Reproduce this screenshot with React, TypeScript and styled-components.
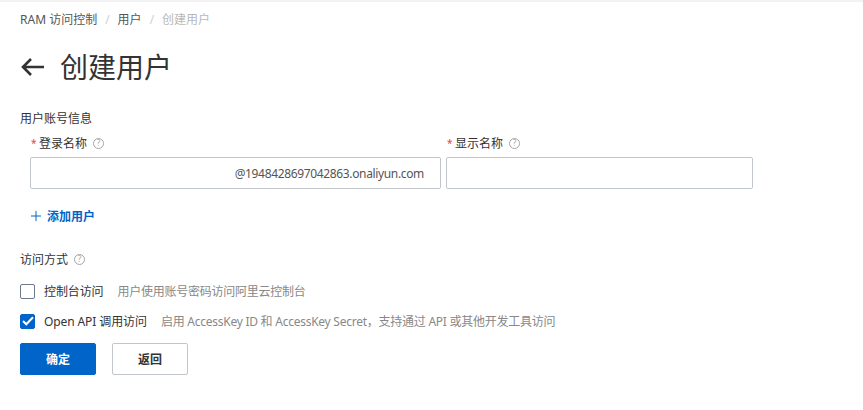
import React from "react";
import styled, { createGlobalStyle } from "styled-components";

const Global = createGlobalStyle`
  html, body { margin: 0; padding: 0; background: #fff; }
  body {
    font-family: "Segoe UI", "Noto Sans", "Noto Sans CJK SC", sans-serif;
    font-size: 12px;
    color: #333;
  }
  * { box-sizing: border-box; }
`;

const Page = styled.div`
  width: 863px;
  height: 410px;
  border-top: 2px solid #f2f2f2;
  padding: 10px 20px 0 20px;
  display: flex;
  flex-direction: column;
`;

const Breadcrumb = styled.nav`
  display: flex;
  align-items: center;
  height: 16px;
  gap: 8px;
  font-size: 12px;
  line-height: 16px;
`;

const Crumb = styled.span<{ $current?: boolean }>`
  color: ${(p) => (p.$current ? "#b8b8b8" : "#555")};
`;

const Sep = styled.span`
  color: #d0d0d0;
`;

const TitleRow = styled.div`
  display: flex;
  align-items: center;
  gap: 14px;
  margin-top: 19px;
  height: 40px;
`;

const Title = styled.h1`
  margin: 0;
  font-size: 28px;
  font-weight: 400;
  color: #333;
  line-height: 40px;
`;

const SectionLabel = styled.div`
  margin-top: 24px;
  font-size: 12px;
  line-height: 16px;
  color: #333;
`;

const Fields = styled.div`
  display: flex;
  gap: 5px;
  margin-top: 8px;
  padding-left: 10px;
`;

const Field = styled.div<{ $w: number }>`
  width: ${(p) => p.$w}px;
  display: flex;
  flex-direction: column;
`;

const Label = styled.div`
  display: flex;
  align-items: center;
  height: 16px;
  font-size: 12px;
  color: #333;
  margin-bottom: 6px;
`;

const Star = styled.span`
  color: #f23c3c;
  font-size: 10px;
  width: 9px;
  padding-left: 1px;
`;

const HelpIcon = styled.span`
  display: inline-flex;
  align-items: center;
  justify-content: center;
  width: 11px;
  height: 11px;
  border: 1px solid #a6a6a6;
  border-radius: 50%;
  color: #a6a6a6;
  font-size: 8px;
  line-height: 1;
  margin-left: 6px;
`;

const InputBox = styled.div`
  height: 32px;
  border: 1px solid #c0c6cc;
  border-radius: 2px;
  display: flex;
  align-items: center;
  justify-content: flex-end;
  padding: 0 16px;
  font-size: 12px;
  color: #555;
  letter-spacing: -0.35px;
`;

const AddLink = styled.div`
  margin-top: 19px;
  margin-left: 11px;
  display: flex;
  align-items: center;
  gap: 6px;
  color: #0064c8;
  font-weight: 600;
  font-size: 12px;
  height: 16px;
`;

const AccessLabel = styled.div`
  margin-top: 27px;
  display: flex;
  align-items: center;
  height: 16px;
  color: #333;
  font-size: 12px;
`;

const OptionList = styled.div`
  margin-top: 16px;
  display: flex;
  flex-direction: column;
  gap: 14px;
`;

const Option = styled.div`
  display: flex;
  align-items: center;
  height: 16px;
  font-size: 12px;
`;

const Box = styled.span<{ $checked?: boolean }>`
  width: 15px;
  height: 15px;
  border-radius: 2px;
  border: 1px solid ${(p) => (p.$checked ? "#0064c8" : "#6c7a8a")};
  background: ${(p) => (p.$checked ? "#0064c8" : "#fff")};
  display: inline-flex;
  align-items: center;
  justify-content: center;
  margin-right: 9px;
`;

const OptText = styled.span`
  color: #333;
  letter-spacing: -0.1px;
`;

const OptDesc = styled.span`
  color: #888;
  margin-left: 14px;
  letter-spacing: -0.25px;
`;

const Actions = styled.div`
  margin-top: 14px;
  display: flex;
  gap: 16px;
`;

const Button = styled.button<{ $primary?: boolean }>`
  width: 76px;
  height: 32px;
  border-radius: 2px;
  font-family: inherit;
  font-size: 12px;
  font-weight: 700;
  cursor: pointer;
  border: 1px solid ${(p) => (p.$primary ? "#0064c8" : "#c0c6cc")};
  background: ${(p) => (p.$primary ? "#0064c8" : "#fff")};
  color: ${(p) => (p.$primary ? "#fff" : "#333")};
`;

const Help = () => <HelpIcon>?</HelpIcon>;

export default function App() {
  return (
    <>
      <Global />
      <Page>
        <Breadcrumb>
          <Crumb>RAM 访问控制</Crumb>
          <Sep>/</Sep>
          <Crumb>用户</Crumb>
          <Sep>/</Sep>
          <Crumb $current>创建用户</Crumb>
        </Breadcrumb>

        <TitleRow>
          <svg width="26" height="20" viewBox="0 0 26 20" fill="none">
            <path d="M24 10H3M11 2L3 10l8 8" stroke="#333" strokeWidth="2.6" strokeLinecap="butt" strokeLinejoin="miter" />
          </svg>
          <Title>创建用户</Title>
        </TitleRow>

        <SectionLabel>用户账号信息</SectionLabel>

        <Fields>
          <Field $w={411}>
            <Label>
              <Star>*</Star>登录名称<Help />
            </Label>
            <InputBox>@1948428697042863.onaliyun.com</InputBox>
          </Field>
          <Field $w={307}>
            <Label>
              <Star>*</Star>显示名称<Help />
            </Label>
            <InputBox />
          </Field>
        </Fields>

        <AddLink>
          <svg width="10" height="10" viewBox="0 0 10 10">
            <path d="M5 0v10M0 5h10" stroke="#0064c8" strokeWidth="1" />
          </svg>
          添加用户
        </AddLink>

        <AccessLabel>
          访问方式<Help />
        </AccessLabel>

        <OptionList>
          <Option>
            <Box />
            <OptText>控制台访问</OptText>
            <OptDesc>用户使用账号密码访问阿里云控制台</OptDesc>
          </Option>
          <Option>
            <Box $checked>
              <svg width="12" height="10" viewBox="0 0 12 10">
                <path d="M1 5l3.3 3.3L11 1.3" stroke="#fff" strokeWidth="2" fill="none" />
              </svg>
            </Box>
            <OptText>Open API 调用访问</OptText>
            <OptDesc>启用 AccessKey ID 和 AccessKey Secret，支持通过 API 或其他开发工具访问</OptDesc>
          </Option>
        </OptionList>

        <Actions>
          <Button $primary>确定</Button>
          <Button>返回</Button>
        </Actions>
      </Page>
    </>
  );
}
